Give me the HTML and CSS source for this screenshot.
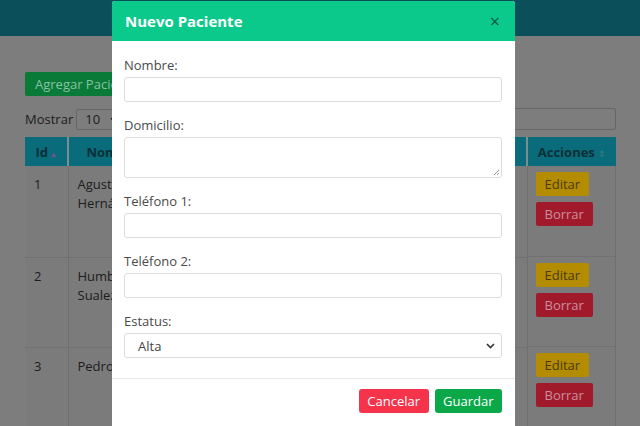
FILE: index.html
```html
<!DOCTYPE html>
<html lang="es">
<head>
<meta charset="utf-8">
<title>Pacientes</title>
<link rel="stylesheet" href="styles.css">
</head>
<body>
<div class="page">
  <header class="topbar"></header>
  <main class="content">
    <button class="btn-add">Agregar Paciente</button>
    <div class="controls">
      <div class="show">Mostrar <span class="len">10 <svg width="8" height="5" viewBox="0 0 8 5"><path d="M1 1l3 3 3-3" fill="none" stroke="#1c1c1c" stroke-width="1.4"/></svg></span></div>
      <div class="search"><span>Buscar:</span><span class="search-box"></span></div>
    </div>
    <table class="grid">
      <thead>
        <tr>
          <th class="c-id">Id <span class="sort up">&#9652;</span></th>
          <th class="c-nom">Nombre</th>
          <th>Domicilio</th>
          <th>Teléfono 1</th>
          <th>Teléfono 2</th>
          <th class="c-est">Estatus <span class="sort">&#8661;</span></th>
          <th class="c-acc">Acciones <span class="sort">&#8661;</span></th>
        </tr>
      </thead>
      <tbody>
        <tr class="r1">
          <td>1</td><td>Agustin Hernández</td><td></td><td></td><td></td><td></td>
          <td class="acts"><span class="b-edit">Editar</span><span class="b-del">Borrar</span></td>
        </tr>
        <tr class="r2">
          <td>2</td><td>Humberto Sualez</td><td></td><td></td><td></td><td></td>
          <td class="acts"><span class="b-edit">Editar</span><span class="b-del">Borrar</span></td>
        </tr>
        <tr class="r3">
          <td>3</td><td>Pedro</td><td></td><td></td><td></td><td></td>
          <td class="acts"><span class="b-edit">Editar</span><span class="b-del">Borrar</span></td>
        </tr>
      </tbody>
    </table>
  </main>
</div>

<div class="modal">
  <div class="m-head">
    <h2>Nuevo Paciente</h2>
    <span class="close">&times;</span>
  </div>
  <div class="m-body">
    <div class="group"><label>Nombre:</label><div class="field"></div></div>
    <div class="group"><label>Domicilio:</label><div class="field area"><svg class="grip" width="8" height="8" viewBox="0 0 8 8"><path d="M7 2L2 7M7 5L5 7" stroke="#999" stroke-width="1"/></svg></div></div>
    <div class="group"><label>Teléfono 1:</label><div class="field"></div></div>
    <div class="group"><label>Teléfono 2:</label><div class="field"></div></div>
    <div class="group"><label>Estatus:</label><div class="field sel"><span>Alta</span><svg width="9" height="6" viewBox="0 0 9 6"><path d="M1 1l3.5 3.5L8 1" fill="none" stroke="#333" stroke-width="1.6"/></svg></div></div>
  </div>
  <div class="m-foot">
    <span class="btn cancel">Cancelar</span>
    <span class="btn save">Guardar</span>
  </div>
</div>
</body>
</html>
```
FILE: styles.css
```css
* { box-sizing: border-box; }
html, body { margin: 0; height: 100%; }
body {
  background: #7d7d7d;
  font-family: "Open Sans", "Liberation Sans", sans-serif;
  font-size: 13px;
  color: #1c1c1c;
  overflow: hidden;
}
/* page behind the modal, drawn in its dimmed colours */
.topbar { height: 36px; background: #0b4f5b; }
.content { padding: 36px 24px 0 25px; }
.btn-add {
  display: block;
  height: 24px;
  padding: 0 10px;
  background: #0a7a38;
  color: #86c2a2;
  border: 0;
  border-radius: 2px;
  font-family: inherit;
  font-size: 13px;
}
.controls {
  display: flex;
  justify-content: space-between;
  align-items: center;
  margin-top: 12px;
  height: 22px;
}
.show { display: flex; align-items: center; gap: 3px; }
.len {
  display: inline-flex; align-items: center; gap: 10px;
  height: 21px; padding: 0 8px; width: 50px;
  border: 1px solid #666; border-radius: 2px;
}
.search { display: flex; align-items: center; gap: 6px; }
.search-box { width: 112px; height: 22px; border: 1px solid #666; border-radius: 2px; }

.grid {
  margin-top: 7px;
  width: 591px;
  border-collapse: collapse;
  table-layout: fixed;
}
.grid th {
  background: #0a6b7a;
  color: #0b3038;
  font-weight: 700;
  height: 29px;
  text-align: center;
  border-right: 2px solid #7a8f93;
  padding: 0 6px;
  white-space: nowrap;
  overflow: hidden;
}
.grid th:last-child { border-right: 0; }
.c-id { width: 43px; }
.c-nom { width: 90px; }
.c-est { width: 90px; }
.c-acc { width: 89px; }
.sort { font-size: 9px; color: #3f7f88; font-weight: 400; }
.sort.up { color: #7c4f8a; }
.grid td {
  vertical-align: top;
  padding: 9px 9px;
  border-right: 1px solid #6f6f6f;
  border-bottom: 1px solid #717171;
  line-height: 19px;
  background: #7b7b7b;
}
.r1 td { height: 91px; }
.r2 td { height: 90px; }
.r3 td { height: 90px; }
.acts { display: flex; flex-direction: column; align-items: flex-start; gap: 6px; padding: 6px 8px !important; }
.b-edit, .b-del {
  display: block; height: 24px; line-height: 24px; padding: 0 9px; border-radius: 2px;
}
.b-edit { background: #b48c02; color: #4a3a08; }
.b-del { background: #a11a2c; color: #c9909a; }

/* modal */
.modal {
  position: absolute;
  left: 112px;
  top: 1px;
  width: 403px;
  background: #fff;
  border-radius: 3px 3px 0 0;
}
.m-head {
  height: 40px;
  background: #0bc98a;
  display: flex;
  align-items: center;
  justify-content: space-between;
  padding: 0 15px 0 13px;
  border-radius: 3px 3px 0 0;
}
.m-head h2 {
  margin: 0;
  font-size: 15px;
  font-weight: 700;
  color: #fff;
}
.close { font-size: 18px; color: #0a5a40; line-height: 1; }
.m-body { padding: 17px 13px 20px 12px; }
.group { margin-bottom: 16px; }
.group:last-child { margin-bottom: 0; }
.group label {
  display: block;
  line-height: 15px;
  margin-bottom: 4px;
  color: #4a4a4a;
  font-size: 13px;
}
.field {
  height: 25px;
  border: 1px solid #dcdcdc;
  border-radius: 3px;
  position: relative;
}
.field.area { height: 41px; }
.grip { position: absolute; right: 1px; bottom: 1px; }
.field.sel {
  display: flex; align-items: center; justify-content: space-between;
  padding: 0 6px 0 13px; color: #444;
}
.m-foot {
  border-top: 1px solid #e6e6e6;
  height: 60px;
  padding: 10px 13px;
  display: flex;
  justify-content: flex-end;
  gap: 6px;
}
.btn {
  height: 24px; line-height: 24px; padding: 0 8.5px; border-radius: 3px;
  color: #fff; font-size: 13px;
}
.cancel { background: #f5334b; }
.save { background: #0ba84a; }
```
